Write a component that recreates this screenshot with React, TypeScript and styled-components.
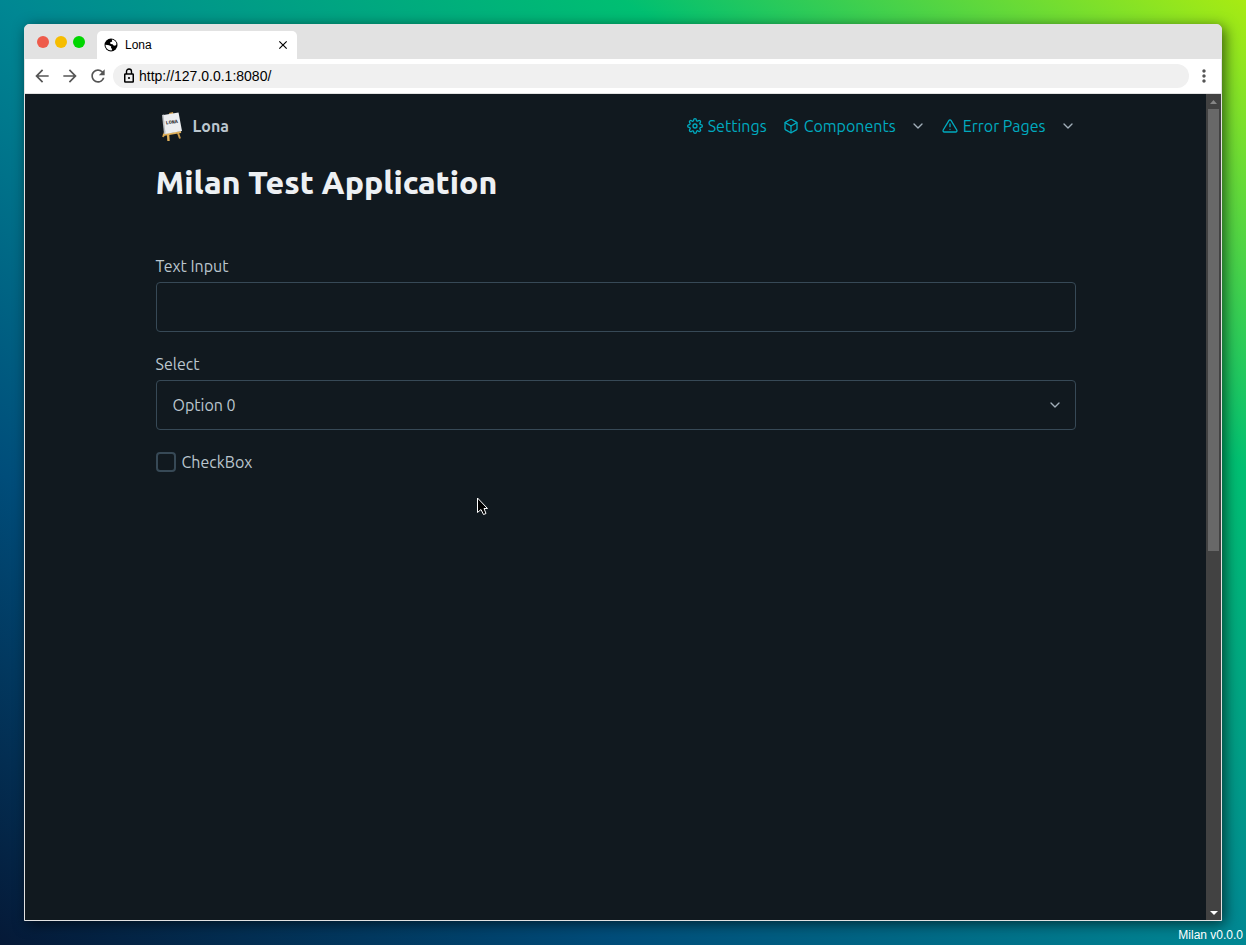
import React from "react";
import styled, { createGlobalStyle } from "styled-components";
import { FiSettings, FiBox, FiAlertTriangle } from "react-icons/fi";
import { MdArrowBack, MdArrowForward, MdRefresh, MdClose, MdMoreVert } from "react-icons/md";
import { ChevronDown } from "lucide-react";

const GlobalStyle = createGlobalStyle`
  *, *::before, *::after { box-sizing: border-box; }
  body {
    margin: 0;
    font-family: "Liberation Sans", Arial, sans-serif;
  }
  button { border: 0; padding: 0; background: none; color: inherit; font: inherit; }
`;

const Desktop = styled.div`
  min-height: 100vh;
  display: flex;
  flex-direction: column;
  padding: 24px 24px 0;
  background: linear-gradient(to top right, #051937, #004d7a, #008793, #00bf72, #a8eb12);
`;

const BrowserWindow = styled.div`
  flex: 1;
  display: flex;
  flex-direction: column;
  border: 1px solid #e2e2e2;
  border-radius: 5px 5px 0 0;
  background: #e2e2e2;
  box-shadow: 3px 3px 14px rgba(0, 0, 0, 0.6);
`;

const TabBar = styled.div`
  display: flex;
  align-items: flex-end;
  height: 34px;
  padding-left: 12px;
`;

const Lights = styled.div`
  display: flex;
  gap: 6px;
  margin: 0 12px 11px 0;
`;

const Light = styled.button<{ $color: string }>`
  width: 12px;
  height: 12px;
  border-radius: 50%;
  background: ${(p) => p.$color};
`;

const Tab = styled.div`
  display: flex;
  align-items: center;
  gap: 7px;
  width: 200px;
  height: 28px;
  padding: 0 7px;
  border-radius: 5px 5px 0 0;
  background: #fff;
  font-size: 12px;
`;

const TabTitle = styled.span`
  flex: 1;
`;

const IconButton = styled.button`
  display: flex;
  align-items: center;
  justify-content: center;
  width: 20px;
  height: 20px;
  color: #555;
`;

const CloseButton = styled(IconButton)`
  width: 14px;
  height: 14px;
  color: #000;
`;

const Toolbar = styled.div`
  display: flex;
  align-items: center;
  gap: 8px;
  height: 35px;
  padding: 0 7px;
  background: #fff;
  border-bottom: 1px solid #e2e2e2;
`;

const AddressBar = styled.label`
  flex: 1;
  display: flex;
  align-items: center;
  gap: 4px;
  height: 24px;
  margin: 0 -3px;
  padding: 0 10px;
  border-radius: 12px;
  background: #f0f0f0;
`;

const AddressInput = styled.input`
  flex: 1;
  min-width: 0;
  border: 0;
  padding: 0;
  outline: 0;
  background: transparent;
  color: #000;
  font: 14px "Liberation Sans", Arial, sans-serif;
`;

const Viewport = styled.div`
  flex: 1;
  display: flex;
  background: #11191f;
`;

const Page = styled.div`
  flex: 1;
  padding: 0 16px;
  color: #bbc6ce;
  font: 16px/24px Ubuntu, "Noto Sans", sans-serif;
`;

const Container = styled.div`
  max-width: 920px;
  margin: 0 auto;
`;

const Nav = styled.nav`
  display: flex;
  align-items: center;
  justify-content: space-between;
  height: 64px;
`;

const Brand = styled.a`
  display: flex;
  align-items: center;
  gap: 5px;
  color: inherit;
  font-weight: 700;
  text-decoration: none;
`;

const NavLinks = styled.div`
  display: flex;
  align-items: center;
  gap: 16px;
`;

const NavLink = styled.a`
  display: flex;
  align-items: center;
  gap: 5px;
  color: #00aabf;
  text-decoration: none;
`;

const MenuButton = styled.button`
  display: flex;
  align-items: center;
  gap: 5px;
  color: #00aabf;
`;

const MenuArrow = styled(ChevronDown)`
  margin-left: 9px;
  color: #a2afb9;
`;

const Title = styled.h1`
  margin: 0 0 48px;
  color: #edf0f3;
  font-size: 32px;
  font-weight: 800;
  line-height: 48px;
`;

const Field = styled.div`
  display: flex;
  flex-direction: column;
  gap: 4px;
  margin-bottom: 20px;
`;

const Control = styled.div`
  display: grid;
  align-items: center;
  height: 50px;
  border: 1px solid #374956;
  border-radius: 4px;

  > * { grid-area: 1 / 1; }
  > svg { justify-self: end; margin-right: 12px; pointer-events: none; color: #a2afb9; }
`;

const TextInput = styled.input`
  width: 100%;
  height: 100%;
  border: 0;
  padding: 0 16px;
  outline: 0;
  background: transparent;
  color: inherit;
  font: inherit;
`;

const Select = styled.select`
  width: 100%;
  height: 100%;
  appearance: none;
  border: 0;
  padding: 0 16px;
  outline: 0;
  background: transparent;
  color: inherit;
  font: inherit;
`;

const CheckLabel = styled.label`
  display: flex;
  align-items: center;
  gap: 6px;
`;

const CheckBox = styled.input`
  appearance: none;
  width: 20px;
  height: 20px;
  margin: 0;
  border: 2px solid #374956;
  border-radius: 4px;
`;

const Scrollbar = styled.div`
  display: flex;
  flex-direction: column;
  align-items: center;
  width: 15px;
  background: #424242;
`;

const ScrollEnd = styled.div`
  display: flex;
  align-items: center;
  justify-content: center;
  height: 15px;
`;

const Track = styled.div`
  flex: 1;
  width: 11px;
`;

const Thumb = styled.div`
  height: 442px;
  background: #686868;
`;

const Version = styled.footer`
  height: 24px;
  margin-right: -21px;
  padding-top: 4px;
  color: #fff;
  font-size: 12px;
  line-height: 20px;
  text-align: right;
`;

const Pointer = styled.svg`
  position: absolute;
  left: 476px;
  top: 496px;
  pointer-events: none;
`;

const Easel = () => (
  <svg width="32" height="32" viewBox="0 0 32 32" aria-hidden="true">
    <path d="M9 22 L7 27 M22 23 L24 28.500" stroke="#c99a4a" strokeWidth="2" />
    <path d="M12 23.500 L12.500 31" stroke="#e0b05a" strokeWidth="2.400" />
    <path d="M13 3 L17 2 L17.500 5 L13.500 6 Z" fill="#c99a4a" />
    <path d="M7 25 L25 22" stroke="#e0b05a" strokeWidth="2.200" />
    <path d="M6 5 L8 4.500 L10 24 L8 24 Z" fill="#b9bcc0" />
    <path d="M7.500 5 L22.500 2.500 L26 21 L9.500 24 Z" fill="#eceef0" />
    <text x="10" y="14.500" transform="rotate(-8 10 14)" fill="#222" fontFamily="Liberation Mono, monospace" fontWeight="700" fontSize="5">LONA</text>
  </svg>
);

const Globe = () => (
  <svg width="14" height="14" viewBox="0 0 14 14" aria-hidden="true">
    <circle cx="7" cy="7" r="6.500" fill="#000" />
    <path d="M7.800 1.600 C10.500 1.800 12.200 3.600 12.500 6.200 L11.200 7.800 L9.600 7.600 L8.600 6.200 L6.600 6 L6 4.600 L8.200 3.600 Z M1.500 6.800 L5 7.200 L7.200 8.600 L7 10 L8.200 11 L7.500 12.500 C4 12.600 1.500 10 1.500 6.800 Z" fill="#fff" />
  </svg>
);

const Lock = () => (
  <svg width="12" height="16" viewBox="0 0 12 16" fill="none" stroke="#000" aria-hidden="true">
    <rect x="1.750" y="6" width="8.500" height="8" rx="0.500" strokeWidth="1.500" />
    <path d="M3.500 6 V3.500 a2.500 2.500 0 0 1 5 0 V6" strokeWidth="1.400" />
    <circle cx="6" cy="10" r="1.100" fill="#000" stroke="none" />
  </svg>
);

const App = () => (
  <>
    <GlobalStyle />
    <Desktop>
      <BrowserWindow>
        <TabBar>
          <Lights>
            <Light $color="#ee5b4b" aria-label="Close window" />
            <Light $color="#f6bd00" aria-label="Minimize window" />
            <Light $color="#00d600" aria-label="Maximize window" />
          </Lights>
          <Tab>
            <Globe />
            <TabTitle>Lona</TabTitle>
            <CloseButton aria-label="Close tab"><MdClose size={14} /></CloseButton>
          </Tab>
        </TabBar>
        <Toolbar>
          <IconButton aria-label="Back"><MdArrowBack size={20} /></IconButton>
          <IconButton aria-label="Forward"><MdArrowForward size={20} /></IconButton>
          <IconButton aria-label="Reload"><MdRefresh size={20} /></IconButton>
          <AddressBar>
            <Lock />
            <AddressInput aria-label="Address" defaultValue="http://127.0.0.1:8080/" />
          </AddressBar>
          <IconButton aria-label="Menu"><MdMoreVert size={20} /></IconButton>
        </Toolbar>
        <Viewport>
          <Page>
            <Container>
              <Nav>
                <Brand href="#"><Easel />Lona</Brand>
                <NavLinks>
                  <NavLink href="#"><FiSettings size={16} />Settings</NavLink>
                  <MenuButton><FiBox size={16} />Components<MenuArrow size={16} /></MenuButton>
                  <MenuButton><FiAlertTriangle size={16} />Error Pages<MenuArrow size={16} /></MenuButton>
                </NavLinks>
              </Nav>
              <Title>Milan Test Application</Title>
              <Field>
                <label htmlFor="text-input">Text Input</label>
                <Control><TextInput id="text-input" type="text" /></Control>
              </Field>
              <Field>
                <label htmlFor="select">Select</label>
                <Control>
                  <Select id="select"><option>Option 0</option></Select>
                  <ChevronDown size={16} />
                </Control>
              </Field>
              <CheckLabel><CheckBox type="checkbox" />CheckBox</CheckLabel>
            </Container>
          </Page>
          <Scrollbar>
            <ScrollEnd>
              <svg width="7" height="4" viewBox="0 0 7 4" fill="#868686"><path d="M3.500 0 L7 4 H0 Z" /></svg>
            </ScrollEnd>
            <Track><Thumb /></Track>
            <ScrollEnd>
              <svg width="8" height="4" viewBox="0 0 8 4" fill="#fff"><path d="M0 0 H8 L4 4 Z" /></svg>
            </ScrollEnd>
          </Scrollbar>
        </Viewport>
      </BrowserWindow>
      <Version>Milan v0.0.0</Version>
      <Pointer width="14" height="20" viewBox="0 0 14 20" aria-hidden="true">
        <path d="M1.500 2 V16.500 L5 13.500 L7.500 18.500 L10 17.500 L8 12.500 H11.500 Z" fill="#000" stroke="#fff" />
      </Pointer>
    </Desktop>
  </>
);

export default App;
